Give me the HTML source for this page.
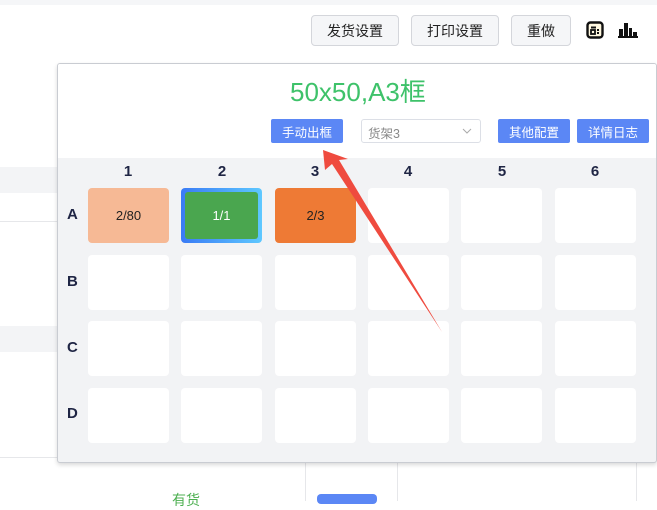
<!DOCTYPE html><html><head><meta charset="utf-8"><style>
body{margin:0;width:657px;height:501px;overflow:hidden;background:#fff;font-family:"Liberation Sans","Noto Sans CJK SC",sans-serif;position:relative}
.a{position:absolute}
.btn{position:absolute;top:15px;height:31px;border:1px solid #d4d6db;border-radius:4px;background:#f5f6f8;font-size:14px;color:#222;display:flex;align-items:center;justify-content:center;box-sizing:border-box}
.bb{position:absolute;top:119px;height:24px;background:#5b87f5;color:#fff;font-size:12.5px;border-radius:2px;display:flex;align-items:center;justify-content:center}
.cell{position:absolute;width:81px;height:55px;background:#fff;border-radius:4px;display:flex;align-items:center;justify-content:center;font-size:13px;color:#222}
.ch{position:absolute;top:163px;font-weight:bold;font-size:15px;color:#1f2544;width:20px;text-align:center}
.rh{position:absolute;left:67px;font-weight:bold;font-size:15px;color:#1f2544}
</style></head><body>
<div class="a" style="left:0;top:0;width:657px;height:5px;background:#f5f6f8"></div>
<div class="a" style="left:0;top:167px;width:60px;height:26px;background:#f3f4f6"></div>
<div class="a" style="left:0;top:221px;width:60px;height:1px;background:#e6e7ea"></div>
<div class="a" style="left:0;top:326px;width:60px;height:26px;background:#f3f4f6"></div>
<div class="a" style="left:0;top:457px;width:657px;height:1px;background:#e6e7ea"></div>
<div class="a" style="left:305px;top:458px;width:1px;height:43px;background:#e6e7ea"></div>
<div class="a" style="left:397px;top:458px;width:1px;height:43px;background:#e6e7ea"></div>
<div class="a" style="left:636px;top:458px;width:1px;height:43px;background:#e6e7ea"></div>
<div class="a" style="left:172px;top:490px;font-size:14px;color:#4caf50">有货</div>
<div class="a" style="left:317px;top:494px;width:60px;height:10px;background:#5b87f5;border-radius:4px"></div>
<div class="btn" style="left:311px;width:88px">发货设置</div>
<div class="btn" style="left:411px;width:88px">打印设置</div>
<div class="btn" style="left:511px;width:60px">重做</div>
<svg class="a" style="left:586px;top:21px" width="18" height="18" viewBox="0 0 18 18"><rect x="1.5" y="1.5" width="15" height="15" rx="3" fill="#fff8e0" stroke="#111" stroke-width="2.4"/><rect x="5" y="5.5" width="5" height="2" fill="#111"/><rect x="5" y="9" width="4" height="4" fill="none" stroke="#111" stroke-width="1.8"/><rect x="11" y="8" width="2" height="2" fill="#111"/><rect x="11" y="11" width="2" height="2" fill="#111"/></svg>
<svg class="a" style="left:618px;top:21px" width="20" height="18" viewBox="0 0 20 18"><rect x="1" y="8" width="4" height="8" fill="#111"/><rect x="6" y="2" width="4" height="14" fill="#111"/><rect x="11" y="7" width="3" height="9" fill="#111"/><rect x="15" y="11" width="4" height="5" fill="#111"/><rect x="0" y="15" width="20" height="2" fill="#111"/></svg>
<div class="a" style="left:57px;top:63px;width:598px;height:398px;border:1px solid #c9ccd2;border-radius:3px;background:#f2f3f5;box-shadow:0 2px 4px rgba(0,0,0,.15);overflow:hidden">
<div class="a" style="left:0;top:0;width:598px;height:94px;background:#fff"></div>
</div>
<div class="a" style="left:290px;top:76px;font-size:26px;color:#3ec26a;line-height:32px">50x50,A3框</div>
<div class="bb" style="left:271px;width:72px">手动出框</div>
<div class="a" style="left:361px;top:119px;width:120px;height:24px;border:1px solid #dcdfe6;border-radius:3px;background:#fff;font-size:12.5px;color:#888;box-sizing:border-box;padding:3px 6px">货架3<svg class="a" style="left:100px;top:8px" width="10" height="6"><path d="M1 1L5 5L9 1" fill="none" stroke="#aaa"/></svg></div>
<div class="bb" style="left:498px;width:72px">其他配置</div>
<div class="bb" style="left:577px;width:72px">详情日志</div>
<div class="ch" style="left:118px">1</div><div class="ch" style="left:212px">2</div><div class="ch" style="left:305px">3</div><div class="ch" style="left:398px">4</div><div class="ch" style="left:492px">5</div><div class="ch" style="left:585px">6</div>
<div class="rh" style="top:206px">A</div><div class="rh" style="top:273px">B</div><div class="rh" style="top:339px">C</div><div class="rh" style="top:405px">D</div>
<div class="cell" style="left:88px;top:188px;background:#f6b995">2/80</div>
<div class="cell" style="left:181px;top:188px;background:linear-gradient(90deg,#3a7bf5,#5ec8ff);"><div style="width:73px;height:47px;background:#4aa64f;border-radius:3px;color:#fff;display:flex;align-items:center;justify-content:center">1/1</div></div>
<div class="cell" style="left:275px;top:188px;background:#ee7a35">2/3</div>
<div class="cell" style="left:368px;top:188px"></div><div class="cell" style="left:461px;top:188px"></div><div class="cell" style="left:555px;top:188px"></div>
<div class="cell" style="left:88px;top:255px"></div><div class="cell" style="left:181px;top:255px"></div><div class="cell" style="left:275px;top:255px"></div><div class="cell" style="left:368px;top:255px"></div><div class="cell" style="left:461px;top:255px"></div><div class="cell" style="left:555px;top:255px"></div>
<div class="cell" style="left:88px;top:321px"></div><div class="cell" style="left:181px;top:321px"></div><div class="cell" style="left:275px;top:321px"></div><div class="cell" style="left:368px;top:321px"></div><div class="cell" style="left:461px;top:321px"></div><div class="cell" style="left:555px;top:321px"></div>
<div class="cell" style="left:88px;top:388px"></div><div class="cell" style="left:181px;top:388px"></div><div class="cell" style="left:275px;top:388px"></div><div class="cell" style="left:368px;top:388px"></div><div class="cell" style="left:461px;top:388px"></div><div class="cell" style="left:555px;top:388px"></div>
<svg class="a" style="left:0;top:0" width="657" height="501"><polygon points="323,150 325,170 332,164 442,332 339,160 348,159" fill="#ef4b3f"/></svg>
</body></html>
